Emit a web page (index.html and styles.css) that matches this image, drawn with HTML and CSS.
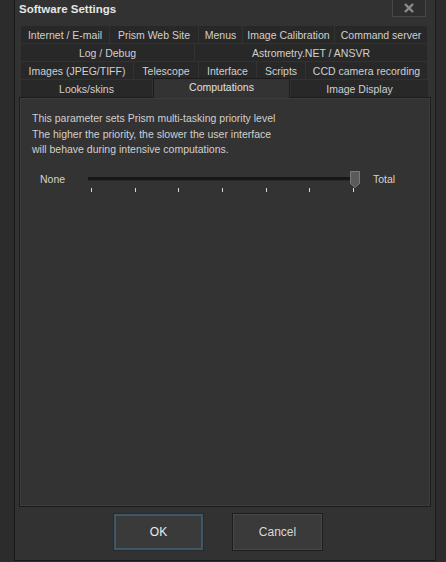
FILE: index.html
```html
<!DOCTYPE html>
<html>
<head>
<meta charset="utf-8">
<link rel="stylesheet" href="styles.css">
</head>
<body>
<div class="window">
  <div class="titlebar">
    <span class="title">Software Settings</span>
    <span class="close"><svg width="12" height="10" viewBox="0 0 12 10"><path d="M2 1 L10 9 M10 1 L2 9" stroke="#8c8c8c" stroke-width="2.4" fill="none"/></svg></span>
  </div>
  <div class="tabs">
    <div class="row">
      <div class="tab" style="width:88px">Internet / E-mail</div>
      <div class="tab" style="width:88px">Prism Web Site</div>
      <div class="tab" style="width:43px">Menus</div>
      <div class="tab" style="width:91px">Image Calibration</div>
      <div class="tab" style="width:92px">Command server</div>
    </div>
    <div class="row">
      <div class="tab" style="width:173px">Log / Debug</div>
      <div class="tab" style="width:232px">Astrometry.NET / ANSVR</div>
    </div>
    <div class="row">
      <div class="tab" style="width:112px">Images (JPEG/TIFF)</div>
      <div class="tab" style="width:64px">Telescope</div>
      <div class="tab" style="width:57px">Interface</div>
      <div class="tab" style="width:48px">Scripts</div>
      <div class="tab" style="width:121px">CCD camera recording</div>
    </div>
    <div class="row">
      <div class="tab" style="width:131px">Looks/skins</div>
      <div class="tab active" style="width:137px">Computations</div>
      <div class="tab" style="width:137px">Image Display</div>
    </div>
  </div>
  <div class="panel">
    <p class="desc">This parameter sets Prism multi-tasking priority level<br>The higher the priority, the slower the user interface<br>will behave during intensive computations.</p>
    <div class="slider">
      <span class="lbl-none">None</span>
      <div class="track-wrap">
        <div class="track"></div>
        <div class="ticks"><i></i><i></i><i></i><i></i><i></i><i></i><i></i></div>
        <svg class="thumb" width="10" height="17" viewBox="0 0 10 17"><path d="M0.5 0.5 H9.5 V12.5 L5 16.5 L0.5 12.5 Z" fill="#5a5a5a" stroke="#7a7a7a" stroke-width="1"/></svg>
      </div>
      <span class="lbl-total">Total</span>
    </div>
  </div>
  <div class="buttons">
    <div class="btn ok">OK</div>
    <div class="btn">Cancel</div>
  </div>
</div>
</body>
</html>
```
FILE: styles.css
```css
html, body {
  margin: 0;
  padding: 0;
  background: #2c2c2c;
  width: 446px;
  height: 562px;
  overflow: hidden;
  font-family: "Liberation Sans", Arial, sans-serif;
  font-size: 10.5px;
  color: #d2d2d2;
}
.window {
  margin-left: 14px;
  width: 422px;
  height: 561px;
  box-sizing: border-box;
  background: #323232;
  border: 1px solid #1a1a1a;
  border-top: none;
  display: flex;
  flex-direction: column;
}
.titlebar {
  height: 22px;
  display: flex;
  align-items: flex-start;
  justify-content: space-between;
}
.title {
  font-weight: bold;
  color: #e6e6e6;
  font-size: 11.5px;
  margin-left: 4px;
  margin-top: 3px;
}
.close {
  width: 34px;
  height: 17px;
  box-sizing: border-box;
  border: 1px solid #474747;
  border-top: none;
  background: #2e2e2e;
  margin-right: 9px;
  display: flex;
  align-items: center;
  justify-content: center;
}
.tabs {
  margin: 4px 0 0 6px;
  display: flex;
  flex-direction: column;
  gap: 1px;
}
.row {
  display: flex;
  gap: 1px;
  height: 17px;
}
.tab {
  background: #282828;
  color: #d0d0d0;
  text-align: center;
  line-height: 18px;
  white-space: nowrap;
  box-sizing: border-box;
}
.tab.active {
  background: #333333;
  border: 1px solid #1c1c1c;
  border-bottom: none;
  margin-top: -2px;
  height: 20px;
  line-height: 17px;
  color: #e0e0e0;
  position: relative;
  z-index: 2;
}
.panel {
  margin: 0 4px 0 4px;
  height: 410px;
  box-sizing: border-box;
  border: 1px solid #1c1c1c;
  box-shadow: inset 1px 1px 0 #3c3c3c, inset -1px -1px 0 #3c3c3c;
  background: #333333;
  padding: 13px 10px 0 12px;
}
.desc {
  margin: 0;
  line-height: 15.5px;
  color: #d0d0d0;
}
.slider {
  display: flex;
  align-items: center;
  margin-top: 11px;
  height: 20px;
}
.lbl-none {
  margin-left: 8px;
  width: 48px;
}
.track-wrap {
  position: relative;
  width: 269px;
  height: 20px;
}
.track {
  position: absolute;
  left: 0;
  right: 0;
  top: 8px;
  height: 3px;
  background: #161616;
  border-bottom: 1px solid #2a2a2a;
}
.ticks {
  position: absolute;
  left: 3px;
  right: 3px;
  top: 19px;
  display: flex;
  justify-content: space-between;
}
.ticks i {
  display: block;
  width: 1px;
  height: 4px;
  background: #d8d8d8;
}
.thumb {
  position: absolute;
  left: 262px;
  top: 2px;
}
.lbl-total {
  margin-left: 16px;
}
.buttons {
  display: flex;
  margin-top: 6px;
  padding-left: 98px;
  gap: 28px;
}
.btn {
  width: 91px;
  height: 38px;
  box-sizing: border-box;
  border: 1px solid #1e1e1e;
  box-shadow: inset 0 0 0 1px #474747;
  background: #3a3a3a;
  display: flex;
  align-items: center;
  justify-content: center;
  color: #d8d8d8;
  font-size: 12px;
}
.btn.ok {
  border: 1px solid #2a2a2a;
  box-shadow: inset 0 0 0 2px #3e5868;
  color: #ececec;
}
```
